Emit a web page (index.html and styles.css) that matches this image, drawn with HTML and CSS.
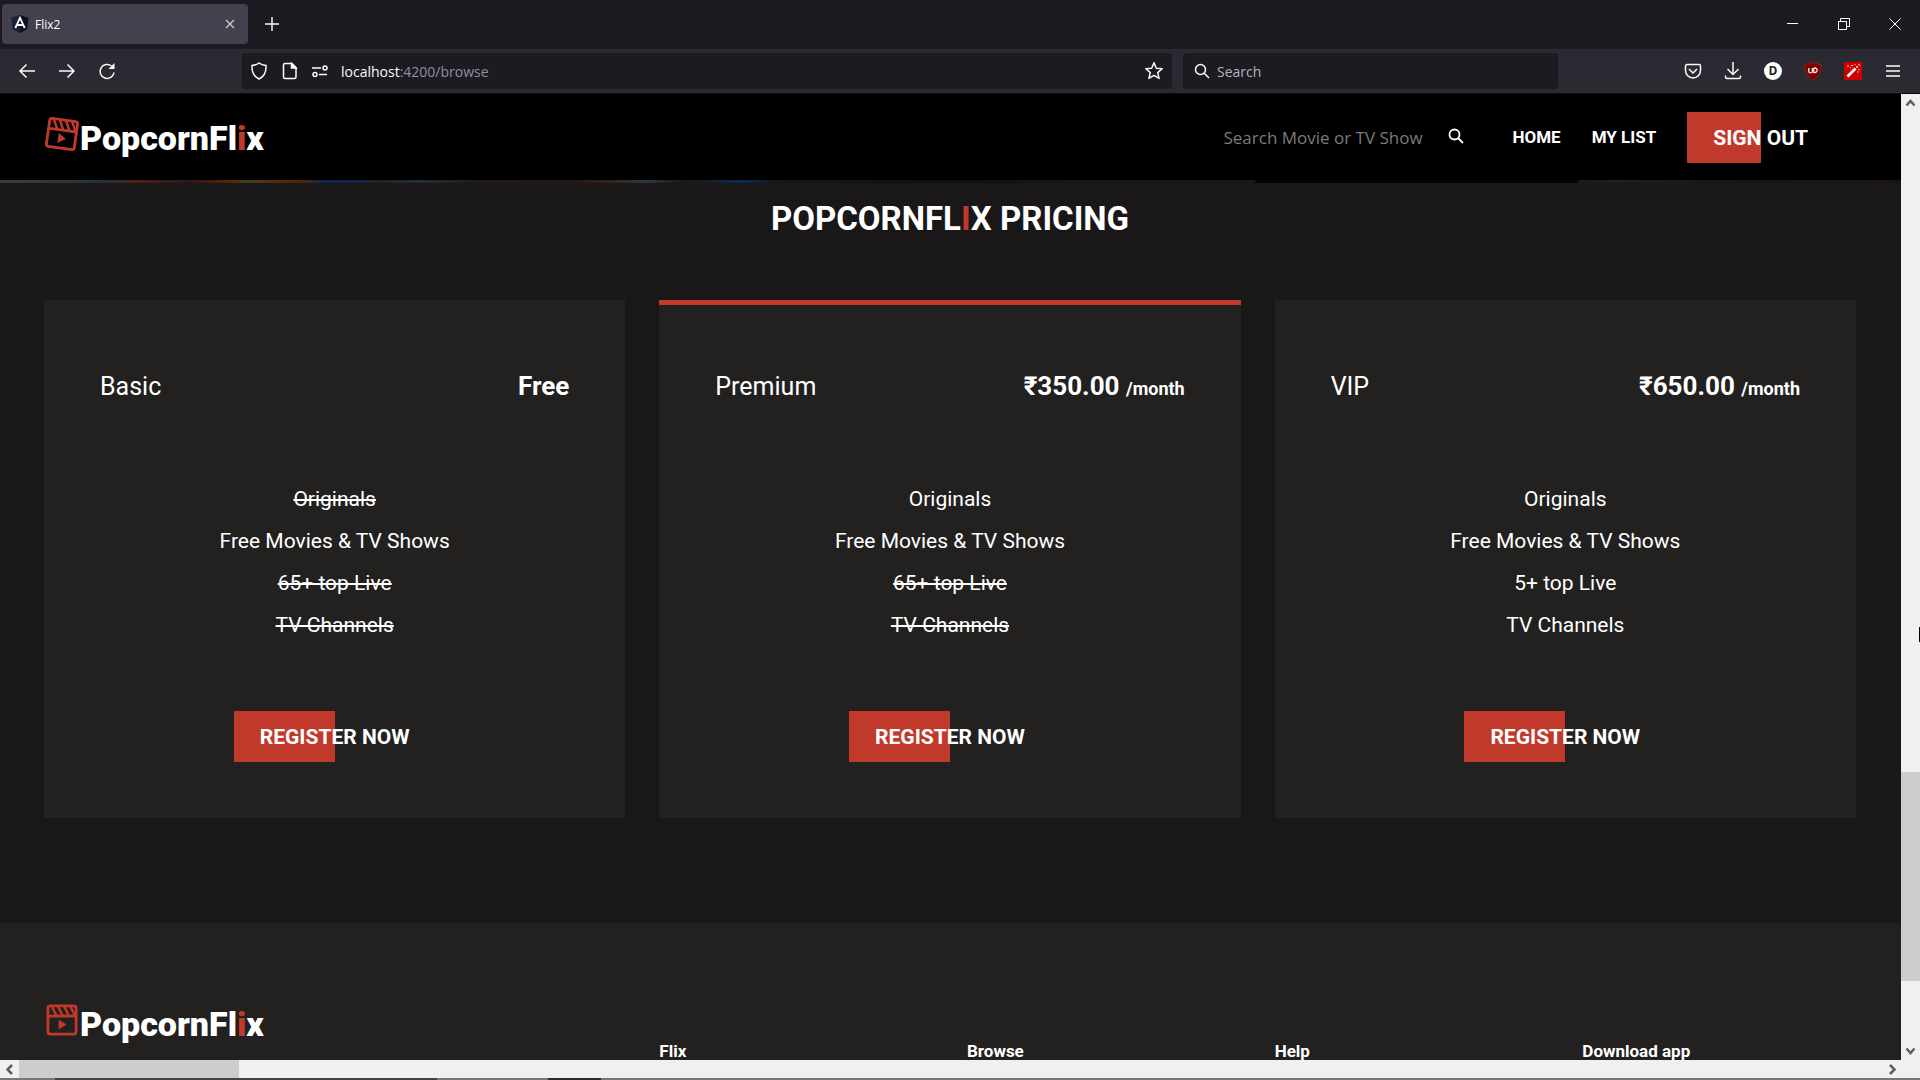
FILE: index.html
```html
<!DOCTYPE html>
<html lang="en">
<head>
<meta charset="utf-8">
<title>Flix2</title>
<link rel="stylesheet" href="styles.css">
</head>
<body>
<svg class="defs" aria-hidden="true">
  <symbol id="clapper" viewBox="0 0 32 32">
    <rect x="3.500" y="3.500" width="25" height="25" rx="2" fill="none" stroke="#c1392b" stroke-width="2.500"/>
    <path d="M3 12.500h26" stroke="#c1392b" stroke-width="2.500"/>
    <path d="M7 4l4 8M12.500 4l4 8M18 4l4 8M23.500 4l4 8" stroke="#c1392b" stroke-width="2.200"/>
    <path d="M13 15.500v9l7-4.500z" fill="#c1392b"/>
  </symbol>
</svg>

<div class="tabs">
  <div class="tab">
    <svg width="18" height="18" viewBox="0 0 18 18"><path d="M9 0l8.500 3-1.300 11L9 18l-7.200-4L.5 3z" fill="#0b1220"/><path d="M9 0v18l-7.200-4L.5 3z" fill="#1b2434"/><path d="M4.300 13L9 2.800 13.700 13M6.200 10h5.600" fill="none" stroke="#fff" stroke-width="1.800"/></svg>
    <span class="tab-title">Flix2</span>
    <button class="tab-close" aria-label="Close tab"><svg width="10" height="10" viewBox="0 0 10 10"><path d="M1 1l8 8M9 1L1 9" stroke="#cfcdd6" stroke-width="1.200"/></svg></button>
  </div>
  <button class="new-tab" aria-label="New tab"><svg width="14" height="14" viewBox="0 0 14 14"><path d="M7 0v14M0 7h14" stroke="#fbfbfe" stroke-width="1.400"/></svg></button>
  <div class="window-controls">
    <button aria-label="Minimize"><svg width="12" height="12" viewBox="0 0 12 12"><path d="M0 5.500h11" stroke="#fff"/></svg></button>
    <button aria-label="Restore"><svg width="12" height="12" viewBox="0 0 12 12" fill="none" stroke="#fff"><path d="M.5 3.500h8v8h-8zM2.500 3V.5h9v8H9"/></svg></button>
    <button aria-label="Close"><svg width="12" height="12" viewBox="0 0 12 12"><path d="M.5.5l11 11M11.500.5l-11 11" stroke="#fff"/></svg></button>
  </div>
</div>

<div class="toolbar">
  <div class="nav-buttons">
    <button aria-label="Back"><svg width="16" height="16" viewBox="0 0 16 16"><path d="M16 8H1M7.500 1.500L1 8l6.500 6.500"/></svg></button>
    <button aria-label="Forward"><svg width="16" height="16" viewBox="0 0 16 16"><path d="M0 8h15M8.500 1.500L15 8l-6.500 6.500"/></svg></button>
    <button aria-label="Reload"><svg width="18" height="18" viewBox="0 0 18 18"><path d="M16 10.500A7 7 0 1 1 13.500 4"/><path d="M16.500 1v6h-6z" fill="#fbfbfe" stroke="none"/></svg></button>
  </div>
  <div class="field url">
    <svg width="18" height="18" viewBox="0 0 18 18"><path d="M9 1c2 1.500 4.500 2.200 7 2.500.3 6-1.500 11-7 13.500C3.500 14.500 1.700 9.500 2 3.500 4.500 3.200 7 2.500 9 1z"/></svg>
    <svg width="18" height="18" viewBox="0 0 18 18"><path d="M4 1.500h7l4 4v9.500a1.500 1.500 0 0 1-1.500 1.500H4A1.500 1.500 0 0 1 2.500 15V3A1.500 1.500 0 0 1 4 1.500z"/><path d="M10.500 1.500V6H15z" fill="#fbfbfe"/></svg>
    <svg width="16" height="16" viewBox="0 0 16 16"><path d="M0 5h9M7 11.500h8"/><circle cx="13" cy="5" r="2"/><circle cx="3" cy="11.500" r="2"/></svg>
    <span class="address"><b>localhost</b>:4200/browse</span>
    <svg width="20" height="20" viewBox="0 0 20 20"><path d="M10 1.800l2.300 5.400 5.900.5-4.500 3.900 1.400 5.800L10 14.300l-5.100 3.100 1.400-5.800-4.500-3.900 5.900-.5z" stroke-linejoin="round"/></svg>
  </div>
  <div class="field find">
    <svg width="16" height="16" viewBox="0 0 16 16"><circle cx="6.500" cy="6.500" r="5"/><path d="M10 10l5 5"/></svg>
    <input type="text" placeholder="Search" aria-label="Search the web">
  </div>
  <div class="tools">
    <button aria-label="Save to Pocket"><svg width="18" height="18" viewBox="0 0 18 18"><path d="M3 2.500h12A1.500 1.500 0 0 1 16.500 4v4.500a7.500 7.500 0 0 1-15 0V4A1.500 1.500 0 0 1 3 2.500zM5 7l4 4 4-4"/></svg></button>
    <button aria-label="Downloads"><svg width="18" height="18" viewBox="0 0 18 18"><path d="M9 0v12M3.500 7L9 12.500 14.500 7M1.500 13.500V15A1.500 1.500 0 0 0 3 16.500h12a1.500 1.500 0 0 0 1.500-1.500v-1.500"/></svg></button>
    <button aria-label="Account"><span class="disc">D</span></button>
    <button aria-label="uBlock Origin"><svg width="18" height="18" viewBox="0 0 18 18"><path d="M9 0c2.500 1.500 5 2 8 2.500C17 9 16 14 9 18 2 14 1 9 1 2.500 4 2 6.500 1.500 9 0z" fill="#800000" stroke="#a33" stroke-width=".5"/><path d="M4.800 6v3.500c0 2 3.500 2 3.500 0V6M9.800 6v4.500c4.500.6 4.500-5.100 0-4.500" stroke="#fff" stroke-width="1.200"/></svg></button>
    <button aria-label="Magic wand"><svg width="18" height="18" viewBox="0 0 18 18"><path d="M0 0h18v18H0z" fill="#cf0000" stroke="none"/><path d="M3.500 14.500l8-8" stroke="#fff" stroke-width="2.600"/><path d="M12.500 5.500l1-1" stroke="#fff" stroke-width="2"/><path d="M4 3v2M7 3.500h2M11 2v1M15 2v2M15 7v1.500M13 10h1.500M6 5.500h1" stroke="#fcc" stroke-width="1"/></svg></button>
    <button aria-label="Menu"><svg width="14" height="14" viewBox="0 0 14 14"><path d="M0 2h14M0 7h14M0 12h14"/></svg></button>
  </div>
</div>

<div class="view">
  <div class="page">
    <header class="header">
      <a class="logo" href="#"><svg class="tilt" width="36" height="36"><use href="#clapper"/></svg><span>PopcornFl<i>i</i>x</span></a>
      <form class="search">
        <input type="text" placeholder="Search Movie or TV Show" aria-label="Search Movie or TV Show">
        <button type="button" aria-label="Search"><svg width="16" height="16" viewBox="0 0 16 16" fill="none" stroke="#fff" stroke-width="1.800"><circle cx="6.500" cy="6.500" r="5"/><path d="M10 10l5 5"/></svg></button>
      </form>
      <nav class="nav"><a href="#">HOME</a><a href="#">MY LIST</a><button class="cta">SIGN OUT</button></nav>
    </header>
    <div class="poster"></div>

    <main class="pricing">
      <h1>POPCORNFL<i>I</i>X PRICING</h1>
      <div class="plans">
        <section class="plan">
          <div class="plan-head"><h2>Basic</h2><strong>Free</strong></div>
          <ul><li><s>Originals</s></li><li>Free Movies &amp; TV Shows</li><li><s>65+ top Live</s></li><li><s>TV Channels</s></li></ul>
          <button class="cta">REGISTER NOW</button>
        </section>
        <section class="plan featured">
          <div class="plan-head"><h2>Premium</h2><strong>₹350.00 <small>/month</small></strong></div>
          <ul><li>Originals</li><li>Free Movies &amp; TV Shows</li><li><s>65+ top Live</s></li><li><s>TV Channels</s></li></ul>
          <button class="cta">REGISTER NOW</button>
        </section>
        <section class="plan">
          <div class="plan-head"><h2>VIP</h2><strong>₹650.00 <small>/month</small></strong></div>
          <ul><li>Originals</li><li>Free Movies &amp; TV Shows</li><li>5+ top Live</li><li>TV Channels</li></ul>
          <button class="cta">REGISTER NOW</button>
        </section>
      </div>
    </main>

    <footer class="footer">
      <a class="logo" href="#"><svg width="36" height="36"><use href="#clapper"/></svg><span>PopcornFl<i>i</i>x</span></a>
      <h3>Flix</h3><h3>Browse</h3><h3>Help</h3><h3>Download app</h3>
    </footer>
  </div>
  <div class="vbar">
    <svg width="19" height="19" viewBox="0 0 19 19"><path d="M5.500 11.500l4-4.500 4 4.500"/></svg>
    <div class="track"><div class="thumb"></div></div>
    <svg width="19" height="19" viewBox="0 0 19 19"><path d="M5.500 7.500l4 4.500 4-4.500"/></svg>
    <div class="pointer"></div>
  </div>
</div>
<div class="hbar">
  <svg width="19" height="18" viewBox="0 0 19 18"><path d="M12 5L7.500 9.500 12 14"/></svg>
  <div class="track"><div class="thumb"></div></div>
  <svg width="19" height="18" viewBox="0 0 19 18"><path d="M8 5l4.500 4.500L8 14"/></svg>
</div>
<div class="taskbar"></div>
</body>
</html>
```
FILE: styles.css
```css
* { box-sizing: border-box; margin: 0; padding: 0; }

body {
  display: flex;
  flex-direction: column;
  height: 100vh;
  overflow: hidden;
  background: #191717;
  color: #fff;
  font-family: Roboto, sans-serif;
}

button, input { border: 0; background: none; color: inherit; font: inherit; outline: 0; }
button { display: flex; align-items: center; justify-content: center; }
a { color: inherit; text-decoration: none; }
svg { display: block; flex: none; }
i { color: #c1392b; font-style: normal; }
.defs { position: absolute; width: 0; height: 0; }

/* Browser tabs */
.tabs {
  flex: none;
  display: flex;
  align-items: center;
  height: 49px;
  padding: 0 0 1px 2px;
  background: #1c1b22;
  font-family: "Open Sans", sans-serif;
}
.tab {
  display: flex;
  align-items: center;
  gap: 6px;
  width: 246px;
  height: 40px;
  padding: 0 10px 0 9px;
  border-radius: 4px;
  background: #42414d;
  font-size: 12px;
}
.tab-title { flex: 1; }
.tab-close { width: 16px; height: 16px; }
.new-tab { width: 48px; height: 40px; }
.window-controls { display: flex; margin-left: auto; }
.window-controls button { width: 51px; height: 40px; }

/* Browser toolbar */
.toolbar {
  flex: none;
  display: flex;
  align-items: center;
  height: 45px;
  padding: 0 7px;
  border-bottom: 1px solid #0c0c0d;
  background: #2b2a33;
  font: 14px "Open Sans", sans-serif;
}
.toolbar svg { fill: none; stroke: #fbfbfe; stroke-width: 1.5; }
.nav-buttons { display: flex; width: 235px; }
.nav-buttons button, .tools button { width: 40px; height: 36px; }
.field {
  display: flex;
  align-items: center;
  height: 36px;
  border-radius: 4px;
  background: #1c1b22;
}
.url { flex: 1; gap: 13px; padding: 0 8px; }
.address { flex: 1; color: #8f8f9d; }
.address b { color: #fbfbfe; font-weight: 400; }
.find { width: 375px; gap: 7px; margin-left: 11px; padding: 0 11px; }
.find input { flex: 1; min-width: 0; }
.find input::placeholder { color: #b4b4bd; opacity: 1; }
.tools { display: flex; margin-left: 115px; }
.disc {
  width: 18px;
  border-radius: 50%;
  background: #fff;
  color: #222;
  font: 700 12px/18px "Open Sans", sans-serif;
}

/* Page view */
.view { flex: 1; min-height: 0; display: flex; }
.page { flex: 1; overflow: hidden; }

.header {
  display: flex;
  align-items: center;
  height: 86px;
  padding: 0 67px 0 44px;
  background: #000;
}
.logo {
  display: flex;
  align-items: center;
  height: 44px;
  font-size: 34px;
  font-weight: 900;
  line-height: 44px;
}
.logo svg { margin-bottom: 6px; }
.logo span { padding-top: 2px; }
.tilt { transform: rotate(8deg); }
.search { display: flex; align-items: center; margin-left: auto; }
.search input { width: 225px; font: 17px "Open Sans", sans-serif; }
.search input::placeholder { color: #7b7b7b; opacity: 1; }
.search button { padding-bottom: 3px; }
.nav {
  display: flex;
  align-items: center;
  gap: 31px;
  margin-left: 48px;
  font-size: 17px;
  font-weight: 700;
}
.cta {
  height: 51px;
  padding: 1px 26px 0;
  background: linear-gradient(90deg, #c1392b 50%, transparent 50%);
  font-size: 21px;
  font-weight: 700;
}

.poster {
  height: 3px;
  background: linear-gradient(90deg, #3a3d3b 0, #303431 4%, #173747 5%, #4a2418 7%, #2d1715 10%, #59230c 12%, #443f22 13%, #5a2409 15%, #52240b 16%, #10254d 17%, #15243f 19%, #1e2327 20%, #20303c 22%, #221a1c 25%, #2a1513 30%, #3b2116 32%, #273a43 34%, #1c1618 36%, #0d2b4b 39%, #10171c 41%, #0c1214 50%, #10191c 58%, #15180f 62%, #131b17 66%, #040404 66%, #040404 83%, #1a1728 83%, #17251a 85%, #0b1913 92%, #1e1512 99%, #160f0f);
}

.pricing { padding: 16px 45px 105px 44px; }
h1 {
  margin-bottom: 61px;
  font-size: 33px;
  line-height: 40px;
  text-align: center;
}
.plans { display: grid; grid-template-columns: repeat(3, 1fr); gap: 34px; }
.plan {
  display: flex;
  flex-direction: column;
  align-items: center;
  padding: 66px 56px 56px;
  border-top: 5px solid transparent;
  background: #22211f;
}
.featured { border-color: #c1392b; }
.plan-head {
  display: flex;
  align-items: baseline;
  justify-content: space-between;
  width: 100%;
  height: 30px;
  margin-bottom: 77px;
  font-size: 26px;
  line-height: 30px;
}
h2 { font-size: 25px; font-weight: 400; }
small { font-size: 18px; }
ul { margin-bottom: 65px; list-style: none; text-align: center; }
li { font-size: 21px; line-height: 42px; }

.footer {
  display: grid;
  grid-template-columns: repeat(6, 1fr);
  column-gap: 34px;
  padding: 78px 45px 78px 44px;
  background: #22211f;
}
.footer .logo { grid-column: span 2; }
h3 { padding-top: 39px; font-size: 17px; line-height: 22px; }

/* Scroll bars */
.vbar, .hbar { display: flex; flex: none; background: #f0f0f0; }
.vbar svg, .hbar svg { fill: none; stroke: #606060; stroke-width: 2.5; }
.track { flex: 1; display: flex; }
.thumb { background: #cdcdcd; }
.vbar { position: relative; flex-direction: column; width: 19px; }
.vbar .track { flex-direction: column; padding-top: 659px; }
.vbar .thumb { height: 209px; }
.hbar { height: 18px; padding-right: 19px; }
.hbar .thumb { width: 220px; }
.pointer {
  position: absolute;
  top: 533px;
  right: 0;
  width: 1px;
  height: 15px;
  background: #000;
}
.taskbar {
  flex: none;
  height: 2px;
  background: linear-gradient(90deg, #777 55px, #444 55px 437px, #777 437px 548px, #2a2a2a 548px 601px, #777 601px);
}
```
